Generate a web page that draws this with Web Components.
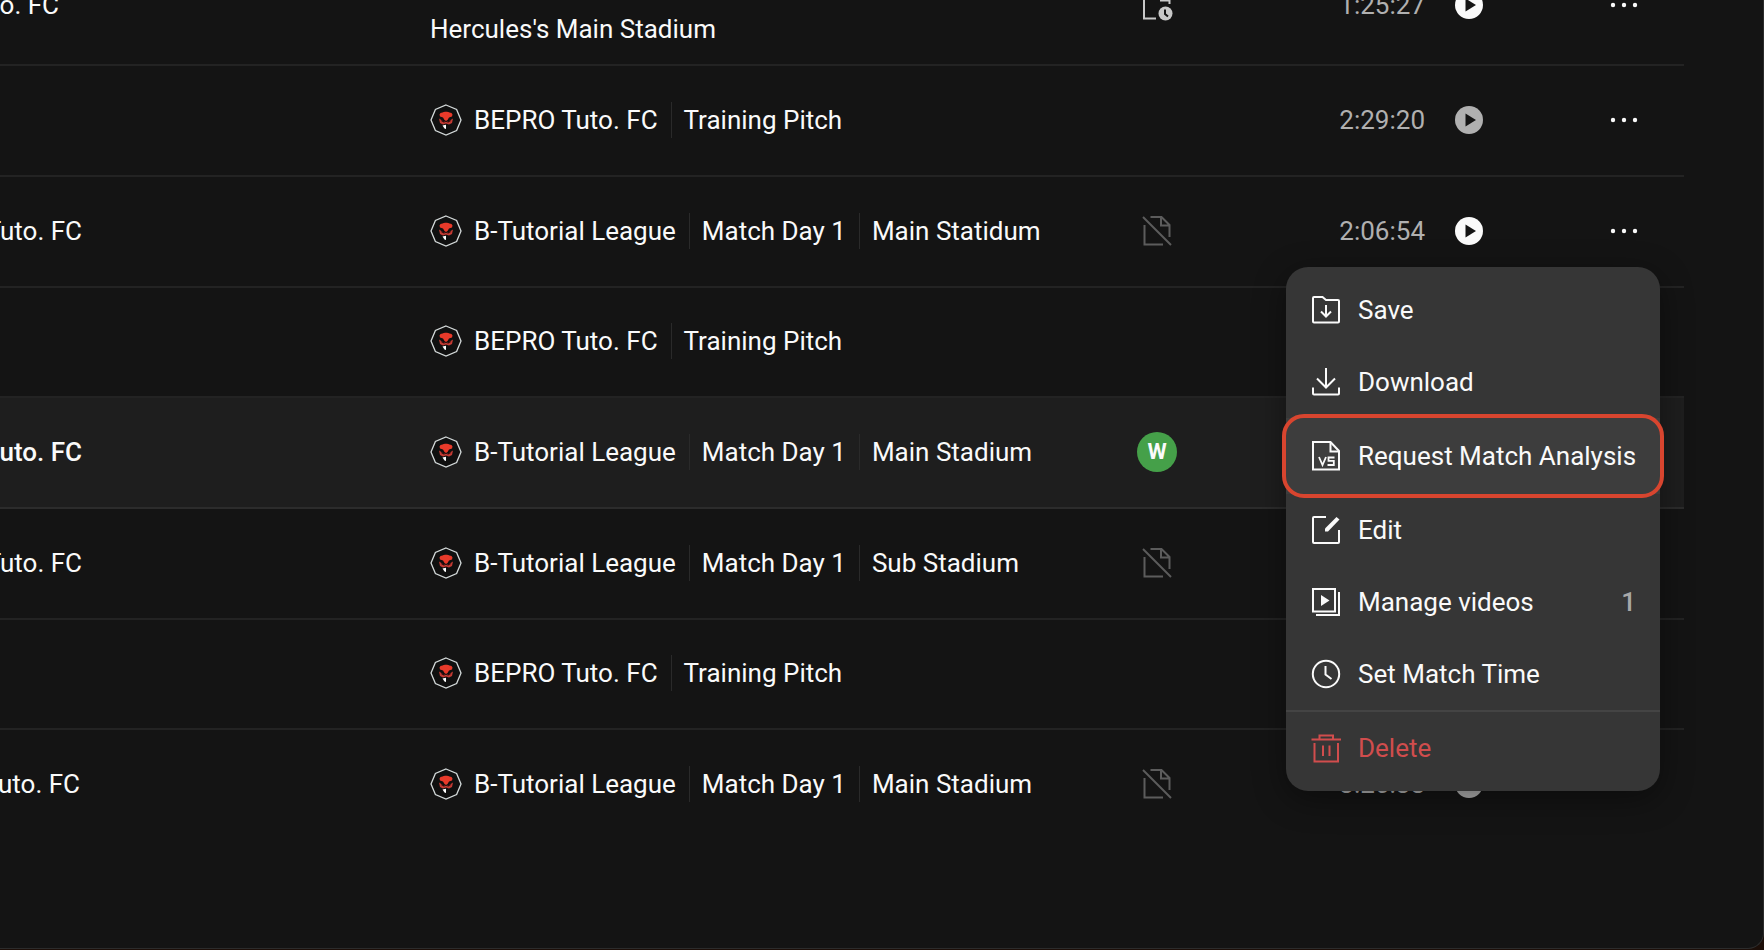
<!DOCTYPE html>
<html lang="en">
<head>
<meta charset="utf-8">
<meta name="viewport" content="width=device-width, initial-scale=1">
<title>Matches</title>
<style>
body {
  margin: 0;
  background: #1c0e08;
  color: #fafafa;
  font-family: Roboto, "Liberation Sans", sans-serif;
  font-size: 26px;
  line-height: 32px;
}
</style>
</head>
<body>
<app-window>
  <match-table></match-table>
</app-window>

<script>
// Icon set, every icon is drawn on a 32 x 32 grid
const icons = {
  club: `
    <path d="M16 1 26.6 5.400 31 16 26.600 26.600 16 31 5.400 26.600 1 16 5.400 5.400Z" fill="#101010" stroke="#d4dada" stroke-width="1.300"/>
    <g stroke="none">
      <path d="M9.500 10.500Q10 8.500 12.500 8.500Q14 7.500 16 7.800Q18 7.500 19.500 8.500Q22 8.500 22.500 10.500L22 12.500 19 13.500 17.500 16 16 17 14.500 16 13 13.500 10 12.500Z" fill="#e83a2a"/>
      <path d="M9 14.500 13 17 16 18 19 17 23 14.500 22 19 19 20.500 16 19.500 13 20.500 10 19Z" fill="#c23a33"/>
      <path d="M12.500 21.500 16 20.800V25L14.500 24.500Z" fill="#fff"/>
    </g>
    <path d="M11.500 16.500 14.500 18.300M20.500 16.500 17.500 18.300" stroke="#2a0a0a" stroke-width="1.300"/>`,
  save: `
    <path d="M4 27.500Q3 27.500 3 26.500V4Q3 3 4 3H12.500L16 6H28Q29 6 29 7V27.500Q29 28.500 28 28.500H4Q3 28.500 3 27.500Z"/>
    <path d="M16 11V22M11 17.500 16 22.500 21 17.500"/>`,
  download: `
    <path d="M16 2V21M7 12.500 16 21.500 25 12.500"/>
    <path d="M3 21.500V27.500Q3 28.500 4 28.500H28Q29 28.500 29 27.500V21.500"/>`,
  analysis: `
    <path d="M3 2H20.500L29 11V29.500H3Z"/>
    <path d="M20.500 2V11.500H29"/>
    <path d="M9 17 12.500 25 16 17M24.500 17.500H18.500V20.800H23.800V25H17.500" stroke-width="1.800"/>`,
  edit: `
    <path d="M16 3H4Q3 3 3 4V28Q3 29 4 29H28Q29 29 29 28V16"/>
    <path d="M15 17.500V14.500L26.500 3 29.500 5.500 18 17.500Z" fill="currentColor" stroke="none"/>`,
  videos: `
    <path d="M3 3H25V25.500H3Z"/>
    <path d="M29 6V29H6"/>
    <path d="M11 9V20L19.500 14.500Z" fill="currentColor" stroke="none"/>`,
  clock: `
    <circle cx="16" cy="16" r="13.200"/>
    <path d="M15.500 8V16.500L21.500 21"/>`,
  trash: `
    <path d="M1.500 7.500H31M9.500 7V3.500H23V7M4.500 11V29.500H28V11M13 13.500V24M19.500 13.500V24"/>`,
  nofile: `
    <path d="M9.500 2H20.500L28.500 10V22M20 2V10.500H28.500M3.500 10V29.500H22"/>
    <path d="M2 2 30 30"/>`,
  pending: `
    <path d="M15 29.500H3V2H20.500L28.500 10V15M20 2V11.500H28.500"/>
    <circle cx="24.500" cy="24.500" r="7" fill="currentColor" stroke="none"/>
    <path d="M24 20.500V25L27 27.500" stroke="#141414"/>`,
  play: `
    <circle cx="16" cy="16" r="14" fill="currentColor" stroke="none"/>
    <path d="M12.500 9.500V22.500L23 16Z" fill="#141414" stroke="none"/>`,
  more: `
    <g fill="currentColor" stroke="none"><circle cx="5" cy="16" r="2.200"/><circle cx="16" cy="16" r="2.200"/><circle cx="27" cy="16" r="2.200"/></g>`
};

class AppIcon extends HTMLElement {
  constructor() {
    super();
    this.attachShadow({mode: 'open'});
  }

  connectedCallback() {
    this.shadowRoot.innerHTML = `
      <style>
      :host { display: block; flex: none; width: 32px; height: 32px; }
      svg { display: block; }
      </style>
      <svg width="32" height="32" viewBox="0 0 32 32" fill="none" stroke="currentColor" stroke-width="2" aria-hidden="true">
        ${icons[this.getAttribute('name')]}
      </svg>`;
  }
}
customElements.define('app-icon', AppIcon);

// Rounded window around the whole page
const windowTemplate = document.createElement('template');
windowTemplate.innerHTML = `
<style>
:host {
  display: block;
  box-sizing: border-box;
  height: 100vh;
  padding-bottom: 1px;
  overflow: hidden;
}
main {
  box-sizing: border-box;
  height: 100%;
  padding-right: 79px;
  overflow: hidden;
  background: #141414;
  border-right: 1px solid #2c2c2c;
  border-bottom: 1px solid #2c2c2c;
  border-bottom-right-radius: 16px;
}
</style>
<main><slot></slot></main>
`;

class AppWindow extends HTMLElement {
  constructor() {
    super();
    this.attachShadow({mode: 'open'});
    this.shadowRoot.appendChild(windowTemplate.content.cloneNode(true));
  }
}
customElements.define('app-window', AppWindow);

// One entry of the context menu
const itemTemplate = document.createElement('template');
itemTemplate.innerHTML = `
<style>
:host { display: block; position: relative; }
:host([danger]) { color: #d14d4d; border-top: 2px solid #444; }
:host([highlight]) { background: #3d3d3d; padding: 2px 0; }
:host([highlight])::after {
  content: "";
  position: absolute;
  inset: -4px;
  border: 4px solid #d8452f;
  border-radius: 22px;
  pointer-events: none;
}
button {
  display: flex;
  align-items: center;
  gap: 16px;
  box-sizing: border-box;
  width: 100%;
  height: 72px;
  padding: 0 24px;
  border: none;
  background: none;
  color: inherit;
  font: inherit;
  text-align: left;
  white-space: nowrap;
  cursor: pointer;
}
.label { flex: 1; }
.count { color: #a8a8a8; font-weight: 500; }
</style>
<button role="menuitem">
  <app-icon></app-icon>
  <span class="label"><slot></slot></span>
  <span class="count"></span>
</button>
`;

class MenuItem extends HTMLElement {
  constructor() {
    super();
    this.attachShadow({mode: 'open'});
    const content = itemTemplate.content.cloneNode(true);
    content.querySelector('app-icon').setAttribute('name', this.getAttribute('icon'));
    if (this.hasAttribute('count')) {
      content.querySelector('.count').textContent = this.getAttribute('count');
    } else {
      content.querySelector('.count').remove();
    }
    this.shadowRoot.appendChild(content);
  }
}

// Menu that opens under the "more" button
const menuTemplate = document.createElement('template');
menuTemplate.innerHTML = `
<style>
:host {
  display: block;
  position: absolute;
  top: 100%;
  right: 0;
  z-index: 2;
  box-sizing: border-box;
  width: 374px;
  padding: 7px 0;
  border-radius: 22px;
  background: #363636;
  box-shadow: 0 8px 32px rgba(0, 0, 0, .4);
  text-align: left;
}
</style>
<div role="menu"><slot></slot></div>
`;

class ContextMenu extends HTMLElement {
  constructor() {
    super();
    this.attachShadow({mode: 'open'});
    this.shadowRoot.appendChild(menuTemplate.content.cloneNode(true));
  }
}

customElements.define('menu-item', MenuItem);
customElements.define('context-menu', ContextMenu);

// Where a match is played: crest, then names with thin separators
class MatchVenue extends HTMLElement {
  constructor() {
    super();
    this.attachShadow({mode: 'open'});
  }

  connectedCallback() {
    const parts = this.getAttribute('parts').split('|');
    this.shadowRoot.innerHTML = `
      <style>
      :host { display: flex; align-items: center; white-space: nowrap; }
      app-icon { margin-right: 12px; }
      span { line-height: 36px; }
      span + span { margin-left: 13px; padding-left: 12px; border-left: 1px solid #2a2a2a; }
      </style>
      ${this.hasAttribute('crest') ? '<app-icon name="club"></app-icon>' : ''}
      ${parts.map(part => `<span>${part}</span>`).join('')}`;
  }
}
customElements.define('match-venue', MatchVenue);

const matches = [
  {team: 'o. FC', end: 'short', venue: [`Hercules's Main Stadium`], file: 'pending', time: '1:25:27', ready: true, tall: true},
  {venue: ['BEPRO Tuto. FC', 'Training Pitch'], time: '2:29:20'},
  {team: 'Tuto. FC', venue: ['B-Tutorial League', 'Match Day 1', 'Main Statidum'], file: 'nofile', time: '2:06:54', ready: true, menu: true},
  {venue: ['BEPRO Tuto. FC', 'Training Pitch']},
  {team: 'uto. FC', venue: ['B-Tutorial League', 'Match Day 1', 'Main Stadium'], result: 'W', active: true},
  {team: 'Tuto. FC', venue: ['B-Tutorial League', 'Match Day 1', 'Sub Stadium'], file: 'nofile'},
  {venue: ['BEPRO Tuto. FC', 'Training Pitch']},
  {team: 'uto. FC', end: 'mid', venue: ['B-Tutorial League', 'Match Day 1', 'Main Stadium'], file: 'nofile', time: '3:26:38', last: true}
];

const menu = `
  <context-menu>
    <menu-item icon="save">Save</menu-item>
    <menu-item icon="download">Download</menu-item>
    <menu-item icon="analysis" highlight>Request Match Analysis</menu-item>
    <menu-item icon="edit">Edit</menu-item>
    <menu-item icon="videos" count="1">Manage videos</menu-item>
    <menu-item icon="clock">Set Match Time</menu-item>
    <menu-item icon="trash" danger>Delete</menu-item>
  </context-menu>`;

class MatchTable extends HTMLElement {
  constructor() {
    super();
    this.attachShadow({mode: 'open'});
  }

  row(match) {
    const classes = ['tall', 'active', 'last'].filter(name => match[name]).join(' ');
    let status = match.file ? `<app-icon name="${match.file}" class="${match.file}"></app-icon>` : '';
    if (match.result) status = `<b class="result">${match.result}</b>`;

    return `
      <tr class="${classes}">
        <td class="team"><span class="${match.end || ''}">${match.team || ''}</span></td>
        <td><match-venue ${match.tall ? '' : 'crest'} parts="${match.venue.join('|')}"></match-venue></td>
        <td class="status">${status}</td>
        <td>${match.time ? `
          <div class="video">
            <time>${match.time}</time>
            <button aria-label="Play" class="${match.ready ? 'ready' : ''}"><app-icon name="play"></app-icon></button>
          </div>` : ''}
        </td>
        <td>${match.time && !match.last ? `
          <div class="more">
            <button aria-label="More"><app-icon name="more"></app-icon></button>
            ${match.menu ? menu : ''}
          </div>` : ''}
        </td>
      </tr>`;
  }

  connectedCallback() {
    this.shadowRoot.innerHTML = `
      <style>
      :host { display: block; }
      table {
        width: 100%;
        margin-top: -54px; /* list is scrolled, first row is half hidden */
        border-collapse: separate;
        border-spacing: 0;
        table-layout: fixed;
      }
      .col-team { width: 430px; }
      .col-status { width: 80px; }
      .col-video { width: 367px; }
      .col-more { width: 120px; }
      td {
        box-sizing: border-box;
        height: 111px;
        padding: 0 0 2px;
        border-bottom: 2px solid #232323;
        vertical-align: middle;
      }
      tr:nth-child(3n + 4) td { height: 110px; }
      .tall td { height: 120px; padding: 0; }
      .tall match-venue { padding-top: 48px; }
      .last td { border-bottom-color: transparent; }
      .active td { background: #1e1e1e; border-bottom-color: #2c2c2c; }
      .active .team { font-weight: 500; }
      .team span {
        display: flex;
        justify-content: flex-end;
        width: 82px;
        overflow: hidden;
        white-space: nowrap;
      }
      .team .short { width: 59px; }
      .team .mid { width: 80px; }
      .status app-icon { margin: 0 auto; }
      .nofile { color: #5c5c5c; }
      .pending { color: #c8c8c8; }
      .result {
        display: block;
        width: 40px;
        margin: 0 auto;
        border-radius: 50%;
        background: #45a049;
        font-size: 22px;
        line-height: 40px;
        text-align: center;
      }
      .video {
        display: flex;
        align-items: center;
        justify-content: flex-end;
        gap: 28px;
        padding-right: 79px;
        color: #b0b0b0;
      }
      button {
        display: block;
        padding: 0;
        border: none;
        background: none;
        color: inherit;
        cursor: pointer;
      }
      .ready { color: #fafafa; }
      .more {
        position: relative;
        display: flex;
        align-items: center;
        justify-content: center;
        width: 72px;
        height: 72px;
        margin: 0 auto;
      }
      </style>
      <table>
        <colgroup>
          <col class="col-team"><col><col class="col-status"><col class="col-video"><col class="col-more">
        </colgroup>
        <tbody>${matches.map(match => this.row(match)).join('')}</tbody>
      </table>`;
  }
}
customElements.define('match-table', MatchTable);
</script>
</body>
</html>
